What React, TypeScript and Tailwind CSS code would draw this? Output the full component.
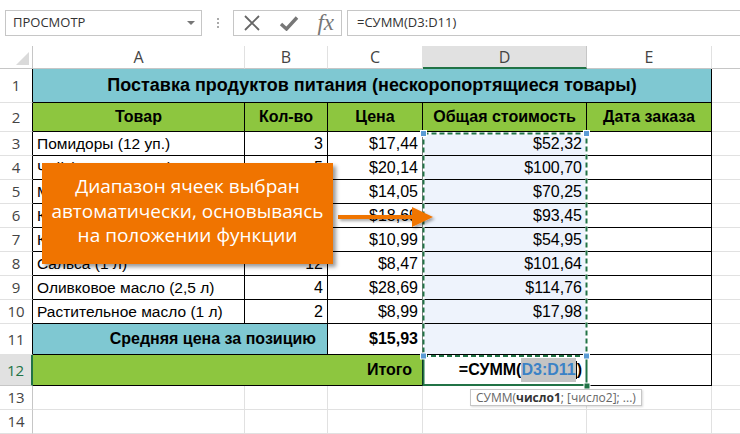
import * as React from 'react';

const items = [
  ['Помидоры (12 уп.)', '3', '$17,44', '$52,32'],
  ['Чай (20 пакетиков)', '5', '$20,14', '$100,70'],
  ['Макароны (500 г)', '5', '$14,05', '$70,25'],
  ['Кофе (250 г)', '5', '$18,69', '$93,45'],
  ['Кетчуп (1 кг)', '5', '$10,99', '$54,95'],
  ['Сальса (1 л)', '12', '$8,47', '$101,64'],
  ['Оливковое масло (2,5 л)', '4', '$28,69', '$114,76'],
  ['Растительное масло (1 л)', '2', '$8,99', '$17,98'],
];

const uiFont = "font-['Open_Sans','Noto_Sans',sans-serif]";

function RowHead({ n, h, active, plain }: { n: number; h: string; active?: boolean; plain?: boolean }) {
  return (
    <div
      className={`${h} w-[33px] shrink-0 flex items-center justify-center border-b border-r ${uiFont} text-[15px] font-normal ${
        active
          ? 'bg-[#e1e1e1] border-r-2 border-r-[#217346] border-b-[#c6c6c6] text-[#217346]'
          : plain
            ? 'border-b-[#e1e1e1] border-r-[#c6c6c6] text-[#444]'
            : 'border-b-[#e1e1e1] border-r-black text-[#444]'
      }`}
    >
      {n}
    </div>
  );
}

function Cell({ className, children }: { className: string; children?: React.ReactNode }) {
  return <div className={`shrink-0 flex items-center pl-[4px] border-r border-b ${className}`}>{children}</div>;
}

export default function App() {
  return (
    <div className="relative w-[740px] h-[434px] overflow-hidden bg-white font-['Liberation_Sans',Arial,sans-serif] text-black">
      {/* formula bar */}
      <div className={`h-[46px] flex items-center pl-[5px] ${uiFont} text-[13px] text-[#333]`}>
        <div className="w-[197px] h-[26px] border border-[#c6c6c6] flex items-center justify-between pl-[7px] pr-[6px]">
          <span>ПРОСМОТР</span>
          <span className="w-0 h-0 border-l-[4px] border-r-[4px] border-t-[4px] border-l-transparent border-r-transparent border-t-[#777]" />
        </div>
        <div className="w-[31px] flex flex-col items-center gap-[2px]">
          <span className="w-[2px] h-[2px] bg-[#aaa]" />
          <span className="w-[2px] h-[2px] bg-[#aaa]" />
          <span className="w-[2px] h-[2px] bg-[#aaa]" />
        </div>
        <div className="w-[109px] h-[26px] border border-[#c6c6c6] flex items-center justify-between pl-[9px] pr-[7px]">
          <svg width="18" height="16" viewBox="0 0 18 16">
            <path d="M2 1 L16 15 M16 1 L2 15" stroke="#666" strokeWidth="1.8" fill="none" />
          </svg>
          <svg width="20" height="16" viewBox="0 0 20 16">
            <path d="M2 9 L7.5 14 L18 2.5" stroke="#777" strokeWidth="3.4" fill="none" />
          </svg>
          <span className="font-['Liberation_Serif',serif] italic text-[23px] leading-none text-[#777] -mt-[2px]">fx</span>
        </div>
        <div className="flex-1 ml-[5px] h-[26px] border-y border-l border-[#c6c6c6] flex items-center pl-[9px]">
          =СУММ(D3:D11)
        </div>
      </div>

      {/* column headers */}
      <div className={`flex h-[23px] ${uiFont} text-[16px] text-[#444]`}>
        <div className="w-[33px] h-full border-r border-b border-[#c6c6c6] relative">
          <span className="absolute right-[3px] bottom-[3px] w-0 h-0 border-l-[13px] border-t-[13px] border-l-transparent border-t-transparent border-r-0 border-b-0 [border-bottom:13px_solid_#dadada]" />
        </div>
        <div className="w-[212px] flex items-center justify-center border-r border-b border-r-[#e1e1e1] border-b-[#c6c6c6]">A</div>
        <div className="w-[83px] flex items-center justify-center border-r border-b border-r-[#e1e1e1] border-b-[#c6c6c6]">B</div>
        <div className="w-[95px] flex items-center justify-center border-r border-b border-r-[#e1e1e1] border-b-[#c6c6c6]">C</div>
        <div className="w-[164px] flex items-center justify-center border-r border-b-2 border-r-[#c6c6c6] border-b-[#217346] bg-[#e1e1e1]">D</div>
        <div className="w-[125px] flex items-center justify-center border-r border-b border-r-[#e1e1e1] border-b-[#c6c6c6]">E</div>
        <div className="flex-1 border-b border-[#c6c6c6]" />
      </div>

      {/* row 1 */}
      <div className="flex text-[18px]">
        <RowHead n={1} h="h-[34px]" />
        <Cell className="w-[679px] h-[34px] justify-center font-bold bg-[#7fc8d2] border-black pr-[4px]">
          Поставка продуктов питания (нескоропортящиеся товары)
        </Cell>
        <Cell className="flex-1 h-[34px] border-r-0 border-b-[#e1e1e1]" />
      </div>

      {/* row 2 */}
      <div className="flex text-[16px] font-bold">
        <RowHead n={2} h="h-[29px]" />
        <Cell className="w-[212px] h-[29px] justify-center pr-[4px] bg-[#8dc63f] border-black">Товар</Cell>
        <Cell className="w-[83px] h-[29px] justify-center pr-[4px] bg-[#8dc63f] border-black">Кол-во</Cell>
        <Cell className="w-[95px] h-[29px] justify-center pr-[4px] bg-[#8dc63f] border-black">Цена</Cell>
        <Cell className="w-[164px] h-[29px] justify-center pr-[4px] bg-[#8dc63f] border-black">Общая стоимость</Cell>
        <Cell className="w-[125px] h-[29px] justify-center pr-[4px] bg-[#8dc63f] border-black">Дата заказа</Cell>
        <Cell className="flex-1 h-[29px] border-r-0 border-b-[#e1e1e1]" />
      </div>

      {/* rows 3-10 */}
      {items.map((it, i) => (
        <div key={i} className="flex text-[16px]">
          <RowHead n={i + 3} h="h-[24px]" />
          <Cell className="w-[212px] h-[24px] border-black whitespace-nowrap overflow-hidden text-[15.5px]">{it[0]}</Cell>
          <Cell className="w-[83px] h-[24px] justify-end pr-[4px] border-black">{it[1]}</Cell>
          <Cell className="w-[95px] h-[24px] justify-end pr-[4px] border-black">{it[2]}</Cell>
          <Cell className="w-[164px] h-[24px] justify-end pr-[4px] border-black bg-[#eef3fc]">{it[3]}</Cell>
          <Cell className="w-[125px] h-[24px] border-black" />
          <Cell className="flex-1 h-[24px] border-r-0 border-b-[#e1e1e1]" />
        </div>
      ))}

      {/* row 11 */}
      <div className="flex text-[16px] font-bold">
        <RowHead n={11} h="h-[31px]" />
        <Cell className="w-[295px] h-[31px] justify-end pr-[11px] bg-[#7fc8d2] border-black">Средняя цена за позицию</Cell>
        <Cell className="w-[95px] h-[31px] justify-end pr-[4px] border-black">$15,93</Cell>
        <Cell className="w-[164px] h-[31px] border-black bg-[#eef3fc]" />
        <Cell className="w-[125px] h-[31px] border-black" />
        <Cell className="flex-1 h-[31px] border-r-0 border-b-[#e1e1e1]" />
      </div>

      {/* row 12 */}
      <div className="flex text-[16px] font-bold">
        <RowHead n={12} h="h-[31px]" active />
        <Cell className="w-[390px] h-[31px] justify-end pr-[10px] bg-[#8dc63f] border-black">Итого</Cell>
        <Cell className="w-[164px] h-[31px] justify-end pr-[4px] border-black">
          =СУММ(<span className="bg-[#c4c4c4] text-[#3b82c6]">D3:D11</span>
          <span className="border-l border-black leading-[18px]">)</span>
        </Cell>
        <Cell className="w-[125px] h-[31px] border-black" />
        <Cell className="flex-1 h-[31px] border-r-0 border-b-[#e1e1e1]" />
      </div>

      {/* rows 13-14 */}
      {[13, 14].map((n) => (
        <div key={n} className="flex">
          <RowHead n={n} h="h-[24px]" plain />
          <Cell className="w-[212px] h-[24px] border-[#e1e1e1]" />
          <Cell className="w-[83px] h-[24px] border-[#e1e1e1]" />
          <Cell className="w-[95px] h-[24px] border-[#e1e1e1]" />
          <Cell className="w-[164px] h-[24px] border-[#e1e1e1]" />
          <Cell className="w-[125px] h-[24px] border-[#e1e1e1]" />
          <Cell className="flex-1 h-[24px] border-r-0 border-[#e1e1e1]" />
        </div>
      ))}

      {/* selection marks and arrow */}
      <svg className="absolute left-0 top-0 pointer-events-none" width="740" height="434" viewBox="0 0 740 434">
        <defs>
          <filter id="sh" x="-20%" y="-50%" width="140%" height="200%">
            <feDropShadow dx="2" dy="2" stdDeviation="1.5" floodColor="#000" floodOpacity="0.35" />
          </filter>
        </defs>
        <rect x="423.5" y="356" width="163" height="29" fill="none" stroke="#217346" strokeWidth="2" />
        <rect x="423.5" y="133.5" width="163" height="222.5" fill="none" stroke="#fff" strokeWidth="2" />
        <rect x="423.5" y="133.5" width="163" height="222.5" fill="none" stroke="#217346" strokeWidth="2" strokeDasharray="5 3" />
        {[
          [423.5, 133.5],
          [586.5, 133.5],
          [423.5, 356],
          [586.5, 356],
        ].map(([x, y], i) => (
          <rect key={i} x={x - 3} y={y - 3} width="6" height="6" fill="#5b9bd5" stroke="#fff" strokeWidth="1" />
        ))}
        <rect x="584" y="383" width="6" height="6" fill="#217346" stroke="#fff" strokeWidth="1" />
        <g filter="url(#sh)">
          <path d="M338 217 L416 217" stroke="#f07400" strokeWidth="4" />
          <path d="M412 207 L433 217 L412 227 Z" fill="#f07400" />
        </g>
      </svg>

      {/* callout */}
      <div className={`absolute left-[42px] top-[163px] w-[291px] h-[101px] bg-[#f07400] shadow-[3px_3px_4px_rgba(0,0,0,0.4)] flex flex-col items-center justify-center ${uiFont} text-white text-[19px] leading-[24.5px] text-center pb-[5px]`}>
        <span>Диапазон ячеек выбран</span>
        <span>автоматически, основываясь</span>
        <span>на положении функции</span>
      </div>

      {/* function tooltip */}
      <div className={`absolute left-[470px] top-[389px] h-[17px] px-[5px] flex items-center bg-white border border-[#c6c6c6] shadow-[1px_1px_2px_rgba(0,0,0,0.15)] ${uiFont} text-[12px] text-[#666] whitespace-nowrap`}>
        СУММ(<b className="text-[#333]">число1</b>; [число2]; ...)
      </div>
    </div>
  );
}
